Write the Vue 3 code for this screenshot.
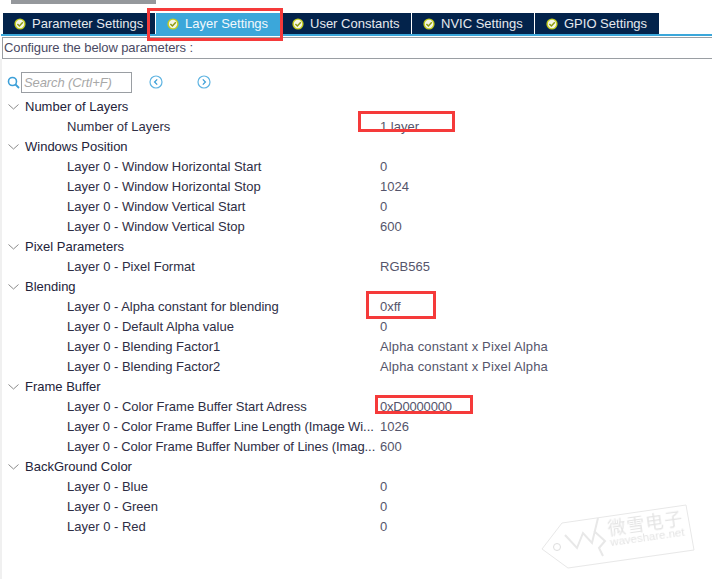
<template>
  <div class="page">
    <div class="topbar"></div>

    <div class="tabs">
      <div
        v-for="tab in tabs"
        :key="tab.name"
        class="tab"
        :class="{ active: tab.active }"
        :style="{ width: tab.width + 'px' }"
      >
        <svg class="check" viewBox="0 0 12 12" width="12" height="12">
          <circle cx="6" cy="6" r="5.6" fill="#c3cc1e" />
          <circle cx="6" cy="6" r="4.2" fill="#f4f5e4" />
          <path d="M3.4 6 L5.4 8 L8.8 4.2" fill="none" stroke="#8d9a12" stroke-width="1.5" />
        </svg>
        <span>{{ tab.name }}</span>
      </div>
    </div>
    <div class="tabline"></div>

    <div class="configure">Configure the below parameters :</div>

    <div class="content">
      <div class="search-row">
        <svg class="lens" viewBox="0 0 13 13" width="13" height="13">
          <circle cx="5.5" cy="5.5" r="4" fill="none" stroke="#3c9fd8" stroke-width="1.6" />
          <path d="M8.5 8.5 L12 12" stroke="#3c9fd8" stroke-width="1.8" />
        </svg>
        <div class="search">Search (Crtl+F)</div>
        <svg class="nav first" viewBox="0 0 14 14" width="14" height="14">
          <circle cx="7" cy="7" r="6" fill="none" stroke="#5fb4e2" stroke-width="1.2" />
          <path d="M8.2 4.4 L5.6 7 L8.2 9.6" fill="none" stroke="#3c9fd8" stroke-width="1.3" />
        </svg>
        <svg class="nav" viewBox="0 0 14 14" width="14" height="14">
          <circle cx="7" cy="7" r="6" fill="none" stroke="#5fb4e2" stroke-width="1.2" />
          <path d="M5.8 4.4 L8.4 7 L5.8 9.6" fill="none" stroke="#3c9fd8" stroke-width="1.3" />
        </svg>
      </div>

      <div class="tree">
        <template v-for="group in groups" :key="group.name">
          <div class="row group">
            <svg class="chevron" viewBox="0 0 11 6" width="11" height="6">
              <path d="M0.5 0.5 L5.5 5 L10.5 0.5" fill="none" stroke="#8a8a8a" stroke-width="1" />
            </svg>
            <span>{{ group.name }}</span>
          </div>
          <div v-for="item in group.items" :key="item[0]" class="row item">
            <span class="label" :class="{ cut: item[0].endsWith('...') }">{{ item[0] }}</span>
            <span
              class="value"
              :class="{ long: item[1].length > 20, hex: item[1].startsWith('0xD') }"
            >{{ item[1] }}</span>
          </div>
        </template>
      </div>
    </div>

    <div class="mark mark-tab"></div>
    <div class="mark mark-layers"></div>
    <div class="mark mark-alpha"></div>
    <div class="mark mark-addr"></div>

    <div class="watermark">
      <svg viewBox="0 0 160 70" width="160" height="70">
        <path
          d="M1 45 L21 19 L145 1 L153 46 L27 64 Z"
          fill="#fff"
          stroke="#e8e8e8"
          stroke-width="1"
        />
        <circle cx="16" cy="43" r="3.5" fill="none" stroke="#dedede" stroke-width="1" />
        <path
          d="M24 31 L36 44 L42 29 L51 39 L57 14 M53 27 L64 37 L58 44 L62 52"
          fill="none"
          stroke="#e8e8e8"
          stroke-width="2"
        />
      </svg>
      <div class="wm-text">
        <div class="wm-cn">微雪电子</div>
        <div class="wm-en">waveshare.net</div>
      </div>
    </div>
  </div>
</template>

<script setup>
const tabs = [
  { name: "Parameter Settings", width: 152 },
  { name: "Layer Settings", width: 124, active: true },
  { name: "User Constants", width: 130 },
  { name: "NVIC Settings", width: 122 },
  { name: "GPIO Settings", width: 124 },
];

const groups = [
  { name: "Number of Layers", items: [["Number of Layers", "1 layer"]] },
  {
    name: "Windows Position",
    items: [
      ["Layer 0 - Window Horizontal Start", "0"],
      ["Layer 0 - Window Horizontal Stop", "1024"],
      ["Layer 0 - Window Vertical Start", "0"],
      ["Layer 0 - Window Vertical Stop", "600"],
    ],
  },
  { name: "Pixel Parameters", items: [["Layer 0 - Pixel Format", "RGB565"]] },
  {
    name: "Blending",
    items: [
      ["Layer 0 - Alpha constant for blending", "0xff"],
      ["Layer 0 - Default Alpha value", "0"],
      ["Layer 0 - Blending Factor1", "Alpha constant x Pixel Alpha"],
      ["Layer 0 - Blending Factor2", "Alpha constant x Pixel Alpha"],
    ],
  },
  {
    name: "Frame Buffer",
    items: [
      ["Layer 0 - Color Frame Buffer Start Adress", "0xD0000000"],
      ["Layer 0 - Color Frame Buffer Line Length (Image Wi...", "1026"],
      ["Layer 0 - Color Frame Buffer Number of Lines (Imag...", "600"],
    ],
  },
  {
    name: "BackGround Color",
    items: [
      ["Layer 0 - Blue", "0"],
      ["Layer 0 - Green", "0"],
      ["Layer 0 - Red", "0"],
    ],
  },
];
</script>

<style>
html,
body {
  margin: 0;
  background: #fff;
}
</style>

<style scoped>
.page {
  position: relative;
  display: flex;
  flex-direction: column;
  width: 712px;
  height: 579px;
  overflow: hidden;
  background: #fff;
  font-family: "Liberation Sans", Arial, sans-serif;
  font-size: 13px;
  color: #3c3c50;
}

.topbar {
  flex: none;
  width: 145px;
  height: 4px;
  margin-left: 11px;
  background: #95989c;
}

.tabs {
  flex: none;
  display: flex;
  height: 21px;
  margin: 9px 0 0 3px;
  gap: 1px;
}

.tab {
  display: flex;
  align-items: center;
  gap: 6px;
  padding-left: 11px;
  box-sizing: border-box;
  background: #03234b;
  color: #e6e9ee;
}

.tab.active {
  background: #3ba7da;
  color: #f2f8fc;
}

.tabline {
  flex: none;
  height: 2px;
  margin-left: 1px;
  background: #3ba7da;
}

.configure {
  flex: none;
  box-sizing: border-box;
  height: 22px;
  margin: 1px 0 0 2px;
  padding-left: 1px;
  border-top: 1px solid #9a9ea3;
  border-bottom: 1px solid #9a9ea3;
  border-left: 1px solid #9a9ea3;
  line-height: 20px;
  letter-spacing: -0.1px;
  color: #4a4a63;
}

.content {
  flex: 1;
  border-left: 2px solid #f0f0f0;
}

.search-row {
  display: flex;
  align-items: center;
  height: 22px;
  margin-top: 12px;
  padding-left: 5px;
}

.lens {
  margin-right: 1px;
}

.search {
  box-sizing: border-box;
  width: 111px;
  height: 21px;
  padding-left: 2px;
  border: 1px solid #9a9ea3;
  line-height: 19px;
  font-style: italic;
  letter-spacing: -0.1px;
  color: #a8a8a8;
}

.nav {
  margin-left: 34px;
}

.nav.first {
  margin-left: 17px;
}

.tree {
  margin-top: 4px;
}

.row {
  display: flex;
  align-items: center;
  height: 20px;
  line-height: 19px;
  padding-bottom: 1px;
  box-sizing: border-box;
}

.group {
  color: #23233a;
}

.chevron {
  margin: 0 6px 0 6px;
}

.item {
  padding-left: 65px;
  color: #2e2e45;
}

.label {
  width: 313px;
  white-space: nowrap;
}

.label.cut {
  letter-spacing: -0.07px;
}

.value {
  color: #55556b;
}

.value.long {
  letter-spacing: 0.14px;
}

.value.hex {
  letter-spacing: -0.2px;
}

.mark {
  position: absolute;
  box-sizing: border-box;
  border: 3px solid #f53a3a;
}

.mark-tab {
  left: 147px;
  top: 8px;
  width: 136px;
  height: 33px;
}

.mark-layers {
  left: 358px;
  top: 111px;
  width: 97px;
  height: 21px;
}

.mark-alpha {
  left: 366px;
  top: 291px;
  width: 70px;
  height: 28px;
}

.mark-addr {
  left: 375px;
  top: 395px;
  width: 98px;
  height: 19px;
}

.watermark {
  position: absolute;
  left: 541px;
  top: 504px;
  width: 160px;
  height: 70px;
}

.wm-text {
  position: absolute;
  left: 67px;
  top: 8px;
  transform: rotate(-8deg);
  color: #e4e4e4;
  text-align: center;
  filter: blur(0.3px);
}

.wm-cn {
  font-family: "Noto Sans CJK SC", sans-serif;
  font-size: 18px;
  line-height: 20px;
  letter-spacing: 1px;
}

.wm-en {
  font-size: 11.5px;
  line-height: 11px;
}
</style>
